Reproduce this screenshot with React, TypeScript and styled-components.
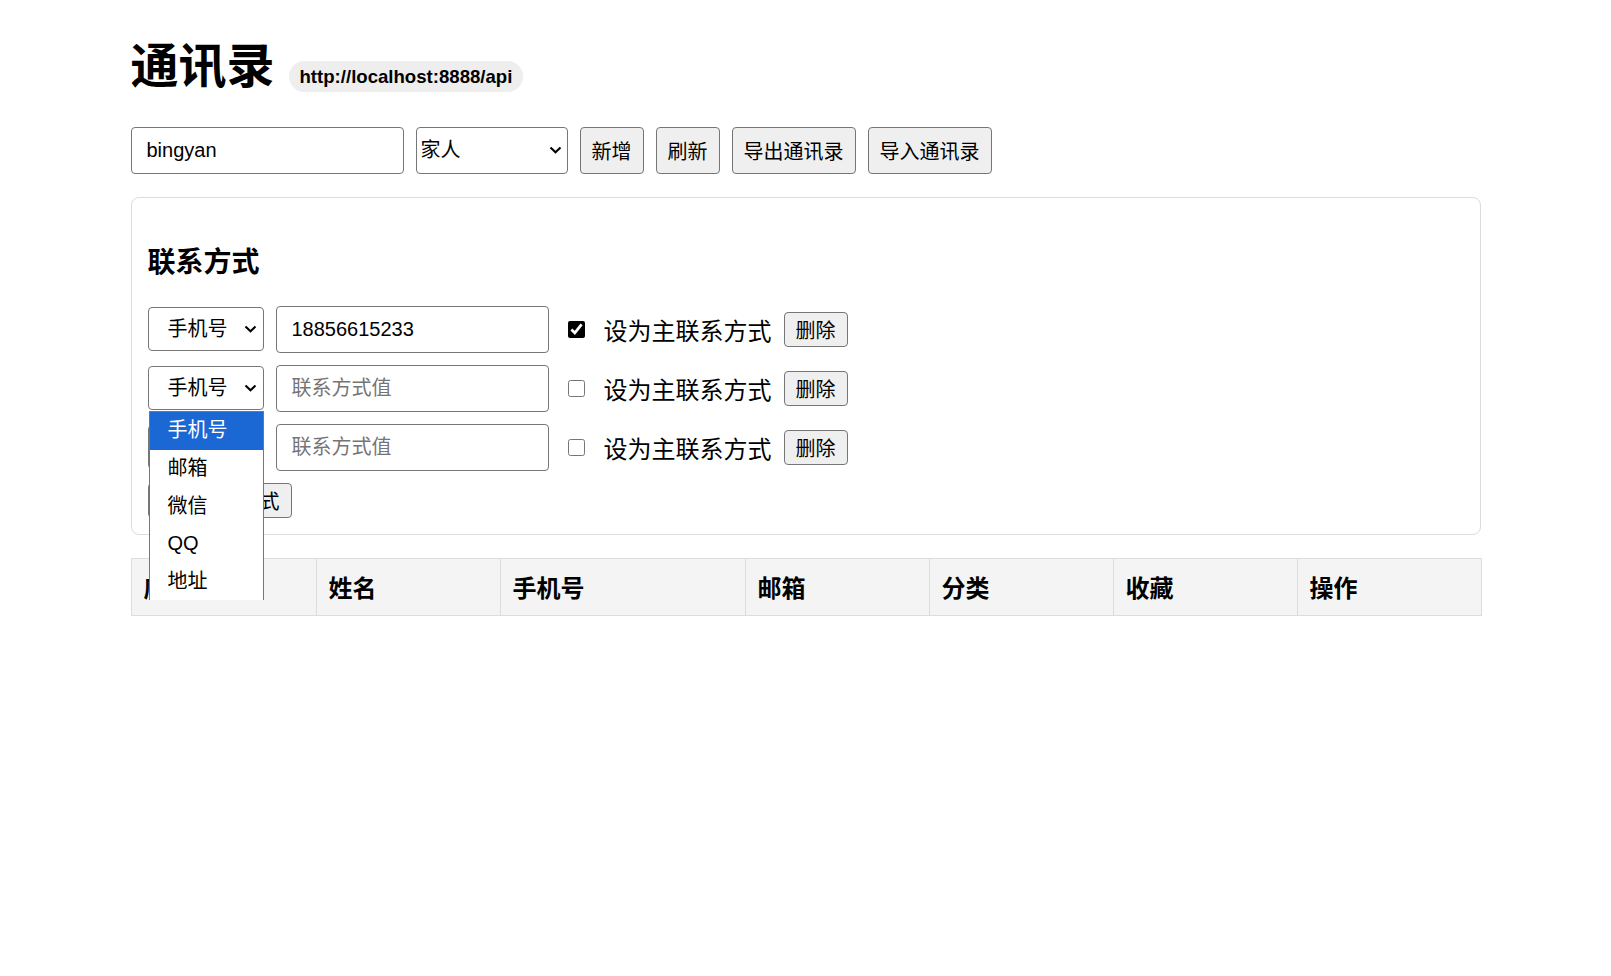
import React from 'react';
import styled, { createGlobalStyle } from 'styled-components';

const GlobalStyle = createGlobalStyle`
    body {
        margin: 0;
        background: #fff;
        color: #000;
        font-family: "Liberation Sans", "Noto Sans CJK SC", sans-serif;
    }
    * {
        box-sizing: border-box;
    }
`;

const contactTypes = ['手机号', '邮箱', '微信', 'QQ', '地址'];
const columns: [string, number][] = [
    ['序号', 185],
    ['姓名', 184],
    ['手机号', 245],
    ['邮箱', 184],
    ['分类', 184],
    ['收藏', 184],
    ['操作', 184],
];

const contacts = [
    { type: '手机号', value: '18856615233', primary: true, open: false },
    { type: '手机号', value: '', primary: false, open: true },
    { type: '手机号', value: '', primary: false, open: false },
];

const Chevron: React.FC<{ right: number }> = ({ right }) => (
    <ChevronIcon width="13" height="8" viewBox="0 0 13 8" style={{ right }}>
        <path d="M1.5 1.5 L6.5 6.2 L11.5 1.5" fill="none" stroke="#000" strokeWidth="2.1" />
    </ChevronIcon>
);

const App: React.FC = () => {
    return (
        <>
            <GlobalStyle />
            <Page>
                <TitleRow>
                    <Title>通讯录</Title>
                    <ApiBadge>http://localhost:8888/api</ApiBadge>
                </TitleRow>

                <Toolbar>
                    <TextInput $width={273} defaultValue="bingyan" />
                    <SelectBox>
                        <Select $width={152} $height={47} $padLeft={4} defaultValue="家人">
                            <option>家人</option>
                            <option>朋友</option>
                            <option>同事</option>
                        </Select>
                        <Chevron right={6} />
                    </SelectBox>
                    <Button>新增</Button>
                    <Button>刷新</Button>
                    <Button>导出通讯录</Button>
                    <Button>导入通讯录</Button>
                </Toolbar>

                <Card>
                    <SectionTitle>联系方式</SectionTitle>
                    {contacts.map((c, i) => (
                        <ContactRow key={i}>
                            <SelectBox $gap={12}>
                                <Select $width={116} $height={44} $padLeft={19} defaultValue={c.type}>
                                    {contactTypes.map(t => <option key={t}>{t}</option>)}
                                </Select>
                                <Chevron right={7} />
                                {c.open && (
                                    <Dropdown>
                                        {contactTypes.map((t, j) => (
                                            <DropOption key={t} $active={j === 0}>{t}</DropOption>
                                        ))}
                                    </Dropdown>
                                )}
                            </SelectBox>
                            <TextInput $width={273} defaultValue={c.value} placeholder="联系方式值" />
                            <Check type="checkbox" defaultChecked={c.primary} />
                            <PrimaryLabel>设为主联系方式</PrimaryLabel>
                            <Button $small>删除</Button>
                        </ContactRow>
                    ))}
                    <Button $small>添加联系方式</Button>
                </Card>

                <Table>
                    <colgroup>
                        {columns.map(([name, w]) => <Col key={name} $w={w} />)}
                    </colgroup>
                    <thead>
                        <tr>
                            {columns.map(([name]) => <Th key={name}>{name}</Th>)}
                        </tr>
                    </thead>
                </Table>
            </Page>
        </>
    );
};

const Page = styled.div`
    max-width: 1350px;
    margin: 0 auto;
    padding-top: 38px;
`;

const TitleRow = styled.div`
    display: flex;
    align-items: baseline;
    gap: 14px;
    margin-bottom: 31px;
`;

const Title = styled.h1`
    margin: 0;
    font-size: 48px;
    line-height: 57.6px;
    font-weight: 700;
`;

const ApiBadge = styled.span`
    font-size: 18.6px;
    font-weight: 700;
    line-height: 21px;
    padding: 5px 11px;
    background: #eee;
    border-radius: 999px;
`;

const Toolbar = styled.div`
    display: flex;
    align-items: center;
    gap: 12px;
    margin-bottom: 23px;
`;

const TextInput = styled.input<{ $width: number }>`
    width: ${p => p.$width}px;
    height: 47px;
    padding: 0 15px;
    font: inherit;
    font-size: 20px;
    color: #000;
    border: 1px solid #767676;
    border-radius: 4px;
    background: #fff;
    &::placeholder {
        color: #757575;
    }
`;

const SelectBox = styled.div<{ $gap?: number }>`
    position: relative;
    margin-right: ${p => p.$gap ?? 0}px;
`;

const Select = styled.select<{ $width: number; $height: number; $padLeft: number }>`
    display: block;
    width: ${p => p.$width}px;
    height: ${p => p.$height}px;
    padding: 0 0 0 ${p => p.$padLeft}px;
    font: inherit;
    font-size: 20px;
    color: #000;
    border: 1px solid #767676;
    border-radius: 4px;
    background: #fff;
    appearance: none;
`;

const ChevronIcon = styled.svg`
    position: absolute;
    top: 50%;
    margin-top: -4px;
    pointer-events: none;
`;

const Button = styled.button<{ $small?: boolean }>`
    height: ${p => (p.$small ? 35 : 47)}px;
    padding: 0 11px;
    font: inherit;
    font-size: 20px;
    color: #000;
    background: #efefef;
    border: 1px solid #767676;
    border-radius: 4px;
    white-space: nowrap;
`;

const Card = styled.div`
    border: 1px solid #dcdcdc;
    border-radius: 8px;
    padding: 16px;
    margin-bottom: 23px;
`;

const SectionTitle = styled.h3`
    margin: 31px 0 25px;
    font-size: 28px;
    line-height: 36px;
    font-weight: 700;
`;

const ContactRow = styled.div`
    display: flex;
    align-items: center;
    height: 47px;
    margin-bottom: 12px;
`;

const Dropdown = styled.div`
    position: absolute;
    top: calc(100% + 1px);
    left: 1px;
    width: 115px;
    height: 189px;
    overflow: hidden;
    background: #fff;
    border: 1px solid #767676;
    border-bottom: none;
    z-index: 10;
`;

const DropOption = styled.div<{ $active?: boolean }>`
    height: 37.8px;
    line-height: 37.8px;
    padding-left: 18px;
    font-size: 20px;
    color: ${p => (p.$active ? '#fff' : '#000')};
    background: ${p => (p.$active ? '#1b67d4' : '#fff')};
`;

const Check = styled.input`
    width: 17px;
    height: 17px;
    margin: 0 19px 0 19px;
    accent-color: #000;
`;

const PrimaryLabel = styled.span`
    font-size: 24px;
    margin-right: 12px;
    white-space: nowrap;
`;

const Table = styled.table`
    width: 100%;
    border-collapse: collapse;
    table-layout: fixed;
`;

const Col = styled.col<{ $w: number }>`
    width: ${p => p.$w}px;
`;

const Th = styled.th`
    height: 57px;
    padding: 0 12px;
    text-align: left;
    font-size: 24px;
    font-weight: 700;
    background: #f4f4f4;
    border: 1px solid #ddd;
`;

export default App;
